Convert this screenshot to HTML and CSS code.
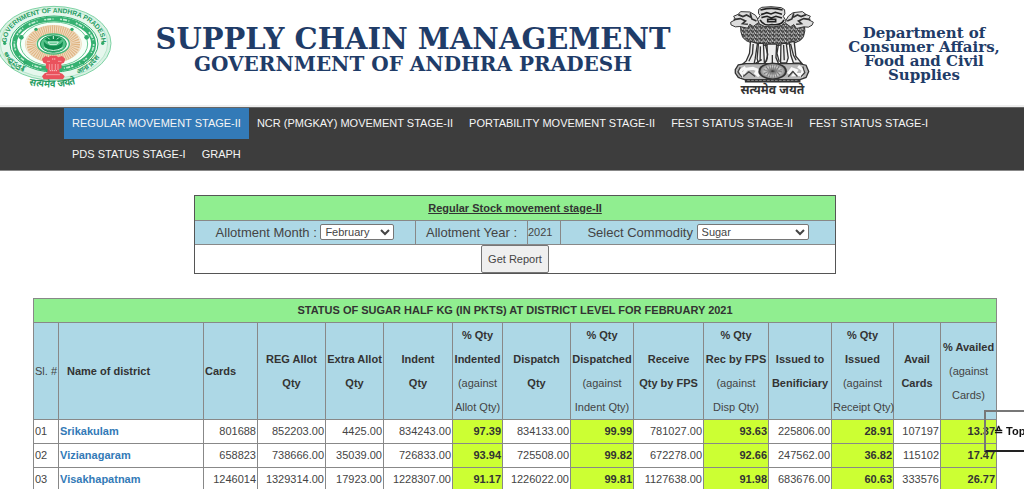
FILE: index.html
```html
<!DOCTYPE html>
<html lang="en">
<head>
<meta charset="utf-8">
<title>Supply Chain Management</title>
<link rel="stylesheet" href="styles.css">
</head>
<body>
<header class="banner">
  <svg class="state-seal" viewBox="0 0 336 276" role="img" aria-label="Government of Andhra Pradesh">
    <defs>
      <path id="arc-top" d="M20 126A142 88 0 0 1 304 126"/>
      <path id="arc-left" d="M14 160Q34 210 94 224"/>
      <path id="arc-right" d="M234 222Q284 204 304 160"/>
      <path id="arc-motto" d="M66 248Q158 276 250 246"/>
    </defs>
    <ellipse cx="162" cy="130" rx="171" ry="111" fill="#d9f2e4" stroke="#7fd3a5" stroke-width="3"/>
    <ellipse cx="162" cy="130" rx="161" ry="104" fill="#e6f7ed" stroke="#a2dfbd" stroke-width="2"/>
    <ellipse cx="162" cy="132" rx="132" ry="84" fill="#fff" stroke="#2fae6c" stroke-width="3"/>
    <ellipse cx="162" cy="132" rx="119" ry="75" fill="none" stroke="#35b171" stroke-width="15"/>
    <ellipse cx="162" cy="132" rx="119" ry="75" fill="none" stroke="#c4ecd5" stroke-width="5" stroke-dasharray="6 3 12 4 3 20"/>
    <ellipse cx="162" cy="132" rx="101" ry="66" fill="#f5fff8" stroke="#65c892" stroke-width="3"/>
    <ellipse cx="160" cy="132" rx="66" ry="42" fill="none" stroke="#f0dcc2" stroke-width="30"/>
    <ellipse cx="160" cy="132" rx="66" ry="42" fill="none" stroke="#dfb583" stroke-width="28" stroke-dasharray="3 3"/>
    <ellipse cx="160" cy="132" rx="84" ry="54" fill="none" stroke="#e5c59f" stroke-width="2"/>
    <ellipse cx="160" cy="132" rx="48" ry="30" fill="#effbf4" stroke="#45b77b" stroke-width="4"/>
    <ellipse cx="160" cy="132" rx="39" ry="25" fill="#56c38a" stroke="#199b58" stroke-width="3"/>
    <path d="M134 118q26-22 52 0l-8 6h-36zM138 131q22 13 44 0l7-7q2 28-29 31-31-3-29-31z" fill="#128c50"/>
    <path d="M144 126h31l-5 7h-21zM132 143q28 17 56 0M160 108v9M144 113l5 5M176 113l-5 5" fill="none" stroke="#d9f6e6" stroke-width="3"/>
    <g fill="#2fab6b"><circle cx="14" cy="130" r="5"/><circle cx="308" cy="130" r="5"/><circle cx="64" cy="112" r="7"/><circle cx="260" cy="112" r="7"/><circle cx="76" cy="187" r="6"/><circle cx="248" cy="187" r="6"/><circle cx="108" cy="88" r="5"/><circle cx="216" cy="88" r="5"/></g>
    <g class="seal-text">
      <text><textPath href="#arc-top" startOffset="50%" text-anchor="middle">GOVERNMENT OF ANDHRA PRADESH</textPath></text>
      <text><textPath href="#arc-left">ఆంధ్రప్రదేశ్</textPath></text>
      <text><textPath href="#arc-right">आन्ध्र प्रदेश</textPath></text>
      <text class="seal-motto"><textPath href="#arc-motto" startOffset="50%" text-anchor="middle">सत्यमेव जयते</textPath></text>
    </g>
    <path d="M126 177l10-9 10 4 5-5h18l6 5 11-4 10 9-4 11-8 3 1 13-7 4 1 10 8 3 7 8-5 9h-58l-5-9 8-9 8-3 1-9-6-4 1-13-8-3z" fill="#ea525c"/>
    <path d="M142 184h8m6-7h11m8 7h9m-36 9v18m8-18v18m10-18v18m8-18v18m-35 13h42m-32-12h23" fill="none" stroke="#fac7c9" stroke-width="3" stroke-dasharray="4 2"/>
  </svg>

  <div class="banner-title">
    <h1>SUPPLY CHAIN MANAGEMENT</h1>
    <p>GOVERNMENT OF ANDHRA PRADESH</p>
  </div>

  <svg class="lion-emblem" viewBox="18 12 260 282" role="img" aria-label="State Emblem of India">
    <defs>
      <pattern id="fur" width="13" height="12" patternUnits="userSpaceOnUse">
        <rect width="13" height="12" fill="#777"/>
        <path d="M0 1l4 7 4-6 5 5M3 12l3-5 6 4" fill="none" stroke="#222" stroke-width="3"/>
        <path d="M2 1l4 4M8 7l4-4M1 9l2 2" stroke="#eee" stroke-width="3"/>
      </pattern>
      <radialGradient id="wheel"><stop offset="0" stop-color="#222"/><stop offset=".2" stop-color="#777"/><stop offset=".65" stop-color="#ccc"/><stop offset="1" stop-color="#888"/></radialGradient>
    </defs>
    <g stroke="#333" stroke-width="3" stroke-linejoin="round">
      <path d="M50 77Q49 96 56 111q7 12 28 18l24 5 37 5 37-5 31-5q22-7 27-19 7-17 3-38L210 60l-25 12-34 7-42-6-28-13z" fill="url(#fur)"/>
      <path d="M20 66l15-8-6-10 14-6 7-8 28 1 17 10 12 20-19 14-10-7-7 12-23-5-14 1-13-6z" fill="#ddd"/>
      <path d="M270 66l-15-8 6-10-14-6-10-8-28 3-14 10-12 20 18 13 10-7 8 12 22-5 14 1 11-6z" fill="#ddd"/>
      <path d="M105 27l9-6 28-2 31 3 10 6 1 13-5 7 9 15-14 13-24 4-27-1-16-8-6-13 8-12-5-7z" fill="#ddd"/>
    </g>
    <path d="M43 43l14 6 11-5 13 7M29 58l20-3 16 7-9 8 16 2M79 39l5 17 14 6M248 43l-15 6-11-5-13 7M261 58l-20-3-16 7 9 8-16 2M211 39l-6 17-14 6" fill="none" stroke="#333" stroke-width="5"/>
    <path d="M110 29q34-10 67 0M112 43l17-6 13 4 13-5 20 6M113 52l17-4 13 5 14-5 18 5M132 57h24v7h-24zM109 59q12 20 36 14 29 4 36-14" fill="none" stroke="#222" stroke-width="5"/>
    <g fill="#eee" stroke="#333" stroke-width="4">
      <path d="M80 124l-3 36-10 23-9 8h33l3-14 7-47z"/>
      <path d="M104 130l-4 46 4 15h18l-3-61zM130 132l1 40-8 20h42l-8-19 2-41zM172 131l-1 58h18l5-15-6-45z"/>
      <path d="M197 127l5 39 8 24h25l-18-21-5-45z"/>
    </g>
    <path d="M88 132l-2 29-11 23m35-45l-1 43m16-48l7 29-4 22m18-20v24m18-53l-4 24 7 26m13-51l2 46m19-50l9 35 8 15m-128 12l24-14m83 12l23 1" fill="none" stroke="#333" stroke-width="4"/>
    <path d="M34 209l9-14 24-4h160l21 5 8 19-8 18-20 7H64l-21-7-9-13z" fill="#b8b8b8" stroke="#333" stroke-width="4"/>
    <path d="M58 222l10-14 19-3 15 6-6 9 10 9M65 202l-15 10 4 21M194 222l11-15 14 5-8 13 24-2M224 199l15 12-5 21" fill="none" stroke="#f8f8f8" stroke-width="9"/>
    <path d="M58 230l17-14 19 14M194 231l14-16 14 15M49 202l-7 14 12 17M238 200l6 18-11 13" fill="none" stroke="#444" stroke-width="4"/>
    <ellipse cx="147" cy="214" rx="43" ry="26" fill="#333"/>
    <ellipse cx="147" cy="214" rx="37" ry="22" fill="url(#wheel)"/>
    <ellipse cx="147" cy="214" rx="19" ry="11" fill="none" stroke="#777" stroke-width="18" stroke-dasharray="2 4"/>
    <path d="M63 238h168v10H63z" fill="#333"/>
    <path d="M70 242h155" stroke="#aaa" stroke-width="2" stroke-dasharray="8 4"/>
    <text class="lion-motto" x="146" y="284" text-anchor="middle">सत्यमेव जयते</text>
  </svg>

  <p class="department">Department of<br>Consumer Affairs,<br>Food and Civil<br>Supplies</p>
</header>

<nav class="menu" aria-label="Main">
  <ul>
    <li><a class="active" href="#" aria-current="page">REGULAR MOVEMENT STAGE-II</a></li>
    <li><a href="#">NCR (PMGKAY) MOVEMENT STAGE-II</a></li>
    <li><a href="#">PORTABILITY MOVEMENT STAGE-II</a></li>
    <li><a href="#">FEST STATUS STAGE-II</a></li>
    <li><a href="#">FEST STATUS STAGE-I</a></li>
    <li><a href="#">PDS STATUS STAGE-I</a></li>
    <li><a href="#">GRAPH</a></li>
  </ul>
</nav>

<main>
  <form class="filter">
    <h2>Regular Stock movement stage-II</h2>
    <div class="filter-row">
      <div class="month"><label for="month">Allotment Month :</label> <select id="month"><option>February</option></select></div>
      <div class="year-label">Allotment Year :</div>
      <div class="year">2021</div>
      <div class="commodity"><label for="commodity">Select Commodity</label> <select id="commodity"><option>Sugar</option></select></div>
    </div>
    <div class="filter-action"><button type="button">Get Report</button></div>
  </form>

  <table class="report">
    <colgroup>
      <col class="c-sl"><col class="c-name"><col class="c-cards"><col class="c-reg"><col class="c-extra"><col class="c-indent"><col class="c-pin"><col class="c-disp"><col class="c-pdisp"><col class="c-recv"><col class="c-prec"><col class="c-issued"><col class="c-piss"><col class="c-avail"><col class="c-pav">
    </colgroup>
    <thead>
      <tr class="report-title"><th colspan="15">STATUS OF SUGAR HALF KG (IN PKTS) AT DISTRICT LEVEL FOR FEBRUARY 2021</th></tr>
      <tr class="heads">
        <th class="plain">Sl. #</th>
        <th class="name-head">Name of district</th>
        <th class="left">Cards</th>
        <th>REG Allot<br>Qty</th>
        <th>Extra Allot<br>Qty</th>
        <th>Indent<br>Qty</th>
        <th>% Qty<br>Indented<br><span>(against<br>Allot Qty)</span></th>
        <th>Dispatch<br>Qty</th>
        <th>% Qty<br>Dispatched<br><span>(against<br>Indent Qty)</span></th>
        <th>Receive<br>Qty by FPS</th>
        <th>% Qty<br>Rec by FPS<br><span>(against<br>Disp Qty)</span></th>
        <th>Issued to<br>Benificiary</th>
        <th>% Qty<br>Issued<br><span>(against<br>Receipt Qty)</span></th>
        <th>Avail<br>Cards</th>
        <th>% Availed<br><span>(against<br>Cards)</span></th>
      </tr>
    </thead>
    <tbody>
      <tr><td class="left">01</td><td class="left"><a href="#">Srikakulam</a></td><td>801688</td><td>852203.00</td><td>4425.00</td><td>834243.00</td><td class="pct">97.39</td><td>834133.00</td><td class="pct">99.99</td><td>781027.00</td><td class="pct">93.63</td><td>225806.00</td><td class="pct">28.91</td><td>107197</td><td class="pct">13.37</td></tr>
      <tr><td class="left">02</td><td class="left"><a href="#">Vizianagaram</a></td><td>658823</td><td>738666.00</td><td>35039.00</td><td>726833.00</td><td class="pct">93.94</td><td>725508.00</td><td class="pct">99.82</td><td>672278.00</td><td class="pct">92.66</td><td>247562.00</td><td class="pct">36.82</td><td>115102</td><td class="pct">17.47</td></tr>
      <tr><td class="left">03</td><td class="left"><a href="#">Visakhapatnam</a></td><td>1246014</td><td>1329314.00</td><td>17923.00</td><td>1228307.00</td><td class="pct">91.17</td><td>1226022.00</td><td class="pct">99.81</td><td>1127638.00</td><td class="pct">91.98</td><td>683676.00</td><td class="pct">60.63</td><td>333576</td><td class="pct">26.77</td></tr>
    </tbody>
  </table>
</main>

<a class="to-top" href="#">≙ Top</a>
</body>
</html>
```
FILE: styles.css
```css
* { box-sizing: border-box; }

body {
  margin: 0;
  background: #fff;
  color: #444;
  font: 11px/24px "Liberation Sans", Arial, sans-serif;
}

a { text-decoration: none; }

/* Banner */
.banner {
  display: flex;
  align-items: flex-start;
  height: 107px;
  border-bottom: 2px solid #eee;
  color: #1f3c68;
  font-family: "DejaVu Serif", serif;
  font-weight: bold;
}

.state-seal { flex: none; width: 112px; height: 92px; }

.banner-title {
  flex: 1;
  padding: 24px 16px 0 0;
  text-align: center;
  white-space: nowrap;
}

.banner-title h1 { margin: 0; font-size: 29px; line-height: 30px; }
.banner-title p { margin: 0; font-size: 20px; line-height: 20px; }

.lion-emblem { flex: none; width: 86px; height: 94px; margin-top: 4px; }

.department {
  flex: none;
  width: 208px;
  margin: 26px 0 0;
  padding-left: 8px;
  font-size: 15px;
  line-height: 14px;
  text-align: center;
  white-space: nowrap;
}

.seal-text { fill: #239c5f; font: bold 20px "Liberation Sans", sans-serif; }
.seal-motto { font-size: 29px; }
.lion-motto { fill: #333; font: bold 37px "Noto Sans", sans-serif; }

/* Menu */
.menu {
  padding: 0 64px;
  border-top: 1px solid #666;
  border-bottom: 1px solid #888;
  background: #3d3d3d;
}

.menu ul {
  display: flex;
  flex-wrap: wrap;
  margin: 0;
  padding: 0;
  list-style: none;
}

.menu a {
  display: block;
  padding: 0 8px;
  color: #f5f5f5;
  font-size: 11px;
  line-height: 31px;
}

.menu .active { background: #337ab7; }

main { padding: 0 27px 0 33px; }

/* Filter form */
.filter {
  width: 67%;
  max-width: 642px;
  margin: 24px auto;
  border: 1px solid #555;
}

.filter h2 {
  margin: 0;
  background: #90ee90;
  color: #333;
  font-size: 11px;
  line-height: 24px;
  text-align: center;
  text-decoration: underline;
}

.filter-row {
  display: grid;
  grid-template-columns: 220fr 112fr 33fr 275fr;
  border: solid #888;
  border-width: 1px 0;
  background: #add8e6;
  font-size: 13px;
  line-height: 23px;
  text-align: center;
}

.filter-row div + div { border-left: 1px solid #888; }
.filter-row .year { font-size: 11px; text-align: left; }

select {
  height: 16px;
  padding: 0;
  border: 1px solid #767676;
  border-radius: 2px;
  background: #fff;
  color: #444;
  font: 11px "Liberation Sans", Arial, sans-serif;
  vertical-align: text-bottom;
}

#month { width: 74px; }
#commodity { width: 112px; }

.filter-action { display: flex; justify-content: center; }

button {
  height: 28px;
  padding: 0 6px;
  border: 1px solid #767676;
  border-radius: 2px;
  background: #efefef;
  color: #444;
  font: 11px "Liberation Sans", Arial, sans-serif;
}

/* Report */
.report {
  width: 100%;
  border: 1px solid #555;
  border-collapse: collapse;
  table-layout: fixed;
}

.report th,
.report td {
  padding: 0 1px;
  border: 1px solid #888;
  white-space: nowrap;
}

.report th { color: #333; }
.report-title { background: #90ee90; line-height: 23px; }
.heads { background: #add8e6; }
.heads span, .heads .plain { color: #444; font-weight: normal; }
.report td { line-height: 23px; text-align: right; }
.report .left { text-align: left; }
.report .name-head { padding-left: 8px; text-align: left; }
.report a { color: #337ab7; font-weight: bold; }
.report .pct { background: #cf3; color: #333; font-weight: bold; }

.c-sl { width: 25px; }
.c-name { width: 145px; }
.c-cards { width: 54px; }
.c-reg { width: 68px; }
.c-extra { width: 58px; }
.c-indent { width: 69px; }
.c-pin { width: 50px; }
.c-disp { width: 68px; }
.c-pdisp { width: 63px; }
.c-recv { width: 70px; }
.c-prec { width: 65px; }
.c-issued { width: 63px; }
.c-piss { width: 62px; }
.c-avail { width: 47px; }
.c-pav { width: 56px; }

/* Back-to-top button, partly past the window's right edge */
.to-top {
  position: fixed;
  right: -20px;
  bottom: 37px;
  width: 60px;
  padding-left: 8px;
  border: 2px solid;
  border-color: #777 #222 #222 #777;
  color: #111;
  font-size: 11px;
  font-weight: bold;
  line-height: 38px;
  white-space: nowrap;
}
```
